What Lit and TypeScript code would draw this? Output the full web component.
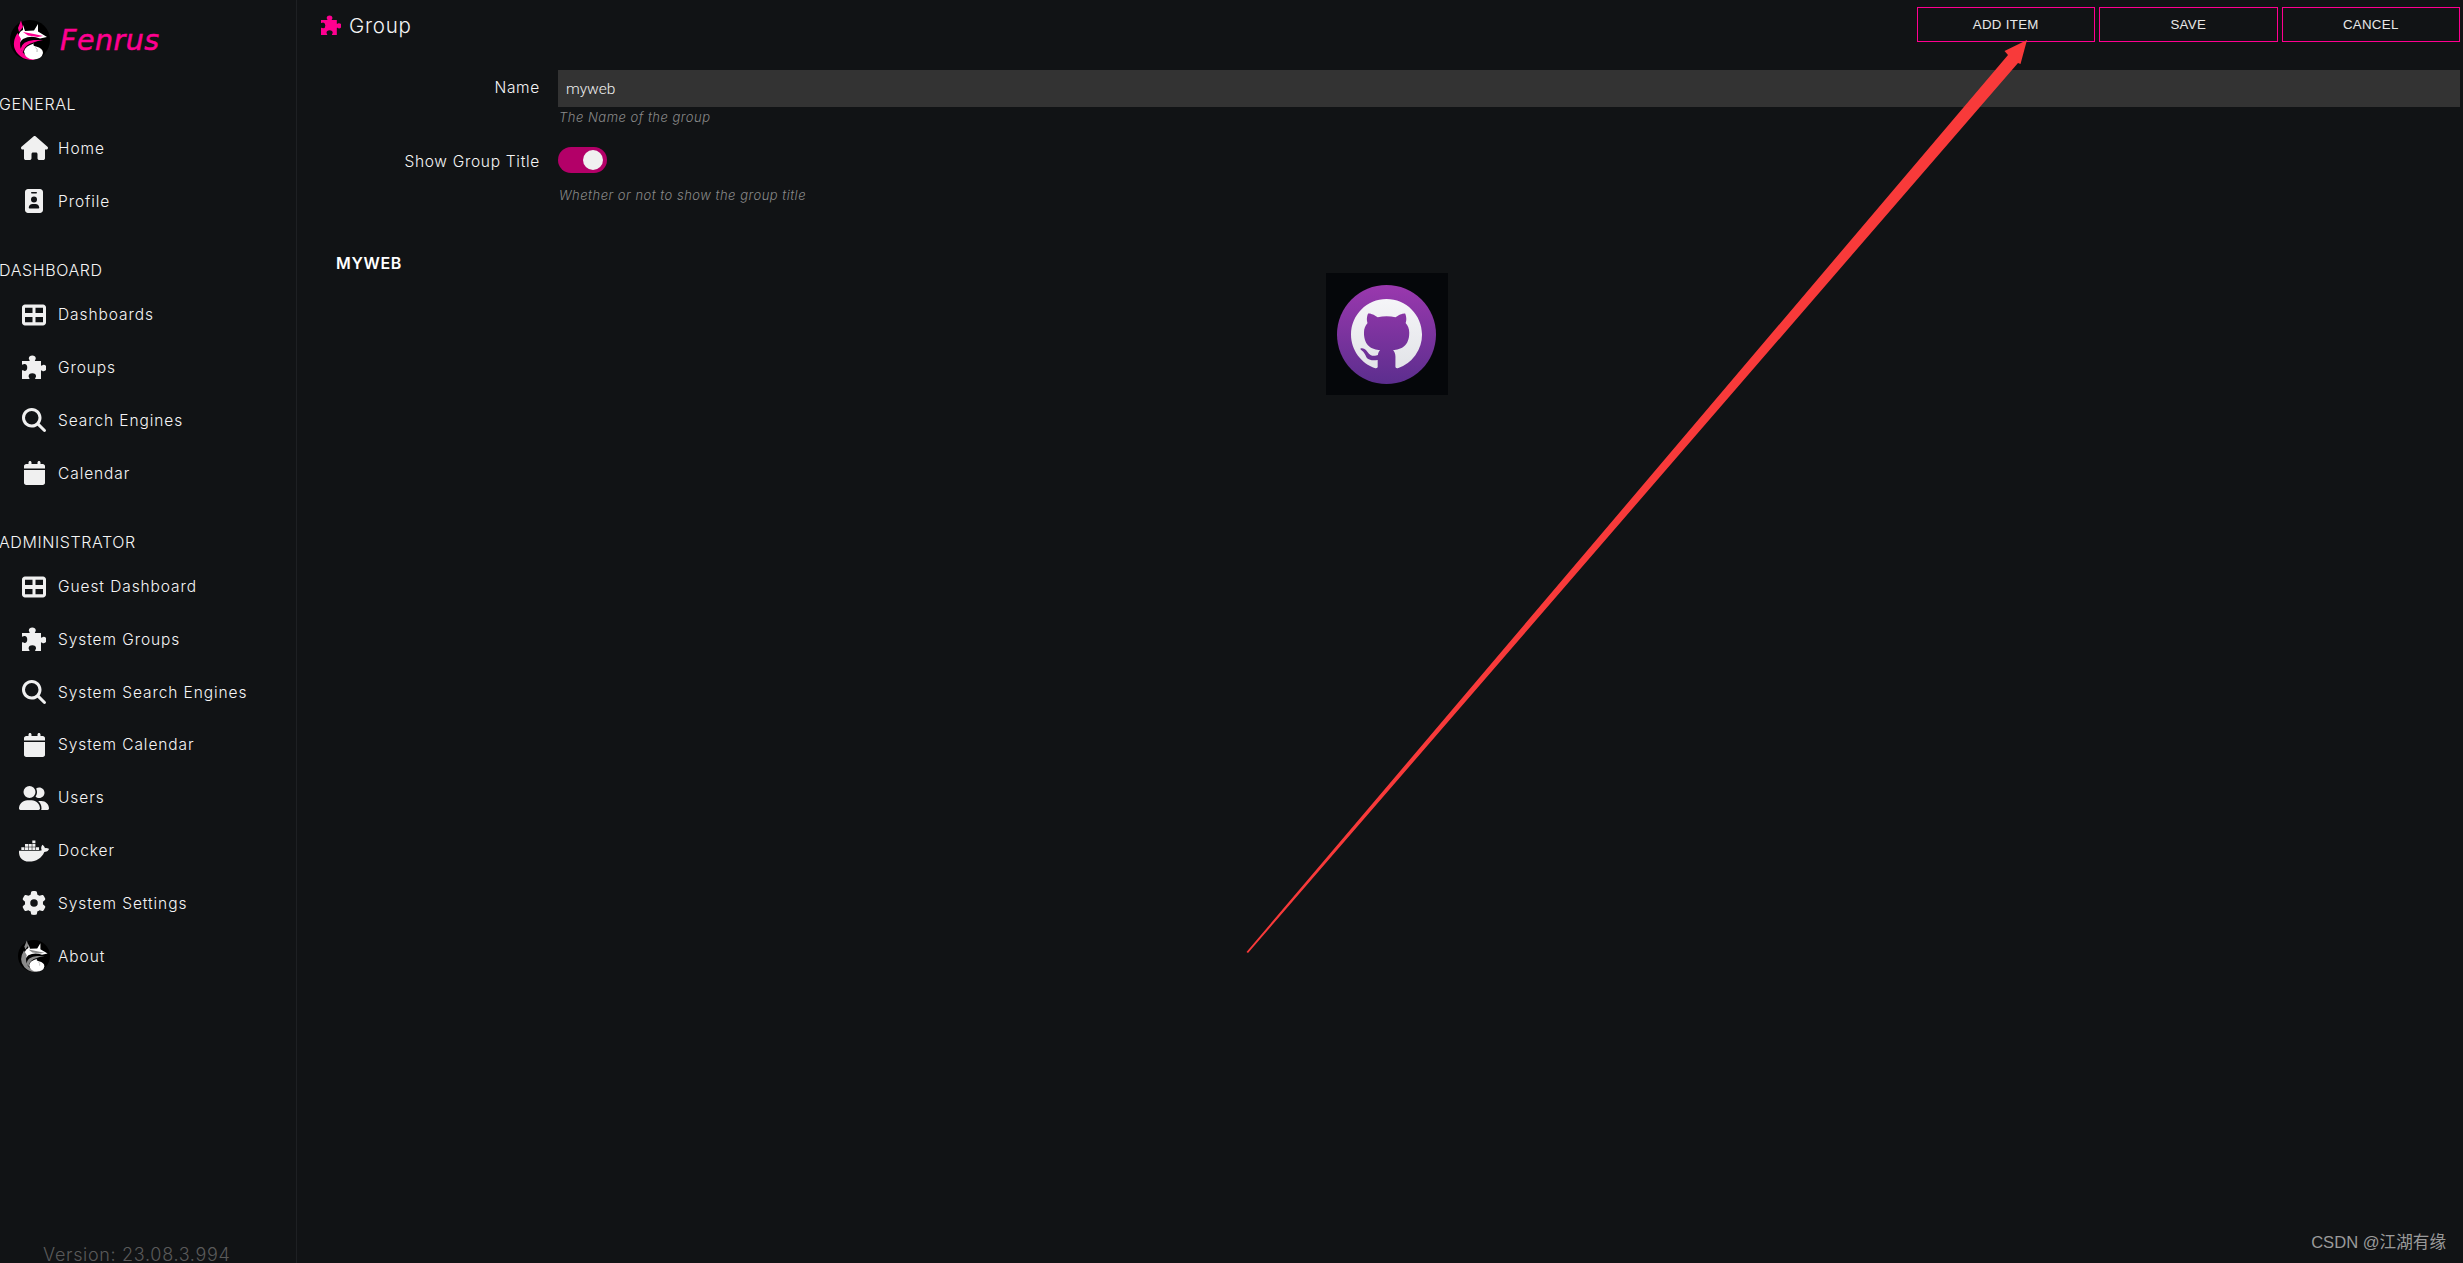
import { LitElement, html, css, svg } from 'lit';
import { customElement, property } from 'lit/decorators.js';

type Icon = { w: number; d: string };

const ICONS: Record<string, Icon> = {
  home: { w: 576, d: 'M575.8 255.5c0 18-15 32.1-32 32.1h-32l.7 160.2c0 2.7-.2 5.4-.5 8.1V472c0 22.1-17.9 40-40 40H456c-1.1 0-2.2 0-3.3-.1c-1.4 .1-2.8 .1-4.2 .1H416 392c-22.1 0-40-17.9-40-40V448 384c0-17.7-14.3-32-32-32H256c-17.7 0-32 14.3-32 32v64 24c0 22.1-17.9 40-40 40H160 128.1c-1.5 0-3-.1-4.5-.2c-1.2 .1-2.4 .2-3.6 .2H104c-22.1 0-40-17.9-40-40V360c0-.9 0-1.9 .1-2.8V287.6H32c-18 0-32-14-32-32.1c0-9 3-17 10-24L266.4 8c7-7 15-8 22-8s15 2 21 7L564.8 231.5c8 7 12 15 11 24z' },
  badge: { w: 384, d: 'M64 0C28.7 0 0 28.7 0 64V448c0 35.3 28.7 64 64 64H320c35.3 0 64-28.7 64-64V64c0-35.3-28.7-64-64-64H64zm96 320h64c44.2 0 80 35.8 80 80c0 8.8-7.2 16-16 16H96c-8.8 0-16-7.2-16-16c0-44.2 35.8-80 80-80zm-32-96a64 64 0 1 1 128 0 64 64 0 1 1 -128 0zM144 64h96c8.8 0 16 7.2 16 16s-7.2 16-16 16H144c-8.8 0-16-7.2-16-16s7.2-16 16-16z' },
  grid: { w: 512, d: 'M448 100V215H288V100H448zm0 197V412H288V297H448zM224 215H64V100H224V215zM64 297H224V412H64V297zM64 32C28.7 32 0 60.7 0 96V416c0 35.3 28.7 64 64 64H448c35.3 0 64-28.7 64-64V96c0-35.3-28.7-64-64-64H64z' },
  puzzle: { w: 512, d: 'M0 128H160C171 107 145 98 145 68A75 64 0 0 1 294 68C294 98 269 107 277 128H405V224C427 235 435 209 459 209A64 68 0 0 1 459 345C435 345 427 320 405 331V512H282C273 491 299 480 299 454A79 64 0 0 0 141 454C141 480 166 491 158 512H0V331C21 320 32 341 55 341A64 75 0 0 0 55 192C32 192 21 213 0 203Z' },
  search: { w: 512, d: 'M416 208c0 45.9-14.9 88.3-40 122.7L502.6 457.4c12.5 12.5 12.5 32.8 0 45.3s-32.8 12.5-45.3 0L330.7 376c-34.4 25.2-76.8 40-122.7 40C93.1 416 0 322.9 0 208S93.1 0 208 0S416 93.1 416 208zM208 352a144 144 0 1 0 0-288 144 144 0 1 0 0 288z' },
  calendar: { w: 448, d: 'M96 32V64H48C21.5 64 0 85.5 0 112v48H448V112c0-26.5-21.5-48-48-48H352V32c0-17.7-14.3-32-32-32s-32 14.3-32 32V64H160V32c0-17.7-14.3-32-32-32S96 14.3 96 32zM448 192H0V464c0 26.5 21.5 48 48 48H400c26.5 0 48-21.5 48-48V192z' },
  users: { w: 640, d: 'M96 128a128 128 0 1 1 256 0A128 128 0 1 1 96 128zM0 482.3C0 383.8 79.8 304 178.3 304h91.4C368.2 304 448 383.8 448 482.3c0 16.4-13.3 29.7-29.7 29.7H29.7C13.3 512 0 498.7 0 482.3zM609.3 512H471.4c5.4-9.4 8.6-20.3 8.6-32v-8c0-60.7-27.1-115.2-69.8-151.8c2.4-.1 4.7-.2 7.1-.2h61.4C567.8 320 640 392.2 640 481.3c0 17-13.8 30.7-30.7 30.7zM432 256c-31 0-59-12.6-79.3-32.9C372.4 196.5 384 163.6 384 128c0-26.8-6.6-52.1-18.3-74.3C384.3 40.1 407.2 32 432 32c61.9 0 112 50.1 112 112s-50.1 112-112 112z' },
  docker: { w: 640, d: 'M349.9 236.3h-66.1v-59.4h66.1v59.4zm0-204.3h-66.1v60.7h66.1V32zm78.2 144.8H362v59.4h66.1v-59.4zm-156.3-72.1h-66.1v60.1h66.1v-60.1zm78.1 0h-66.1v60.1h66.1v-60.1zm276.8 100c-14.4-9.7-47.6-13.2-73.1-8.4-3.3-24-16.7-44.9-41.1-63.7l-14-9.3-9.3 14c-18.4 27.8-23.4 73.6-3.7 103.8-8.7 4.7-25.8 11.1-48.4 10.7H2.4c-8.7 50.8 5.8 116.8 44 162.1 37.1 43.9 92.7 66.2 165.4 66.2 157.4 0 273.9-72.5 328.4-204.2 21.4.4 67.6.1 91.3-45.2 1.5-2.5 6.6-13.2 8.5-17.1l-13.3-8.9zm-511.1-27.9h-66v59.4h66.1v-59.4zm78.1 0h-66.1v59.4h66.1v-59.4zm78.1 0h-66.1v59.4h66.1v-59.4zm-78.1-72.1h-66.1v60.1h66.1v-60.1z' },
  cog: { w: 512, d: 'M495.9 166.6c3.2 8.7 .5 18.4-6.4 24.6l-43.3 39.4c1.1 8.3 1.7 16.8 1.7 25.4s-.6 17.1-1.7 25.4l43.3 39.4c6.9 6.2 9.6 15.9 6.4 24.6c-4.4 11.9-9.7 23.3-15.8 34.3l-4.7 8.1c-6.6 11-14 21.4-22.1 31.2c-5.9 7.2-15.7 9.6-24.5 6.8l-55.7-17.7c-13.4 10.3-28.2 18.9-44 25.4l-12.5 57.1c-2 9.1-9 16.3-18.2 17.8c-13.8 2.3-28 3.5-42.5 3.5s-28.7-1.2-42.5-3.5c-9.2-1.5-16.2-8.7-18.2-17.8l-12.5-57.1c-15.8-6.5-30.6-15.1-44-25.4L83.1 425.9c-8.8 2.8-18.6 .3-24.5-6.8c-8.1-9.8-15.5-20.2-22.1-31.2l-4.7-8.1c-6.1-11-11.4-22.4-15.8-34.3c-3.2-8.7-.5-18.4 6.4-24.6l43.3-39.4C64.6 273.1 64 264.6 64 256s.6-17.1 1.7-25.4L22.4 191.2c-6.9-6.2-9.6-15.9-6.4-24.6c4.4-11.9 9.7-23.3 15.8-34.3l4.7-8.1c6.6-11 14-21.4 22.1-31.2c5.9-7.2 15.7-9.6 24.5-6.8l55.7 17.7c13.4-10.3 28.2-18.9 44-25.4l12.5-57.1c2-9.1 9-16.3 18.2-17.8C227.3 1.2 241.5 0 256 0s28.7 1.2 42.5 3.5c9.2 1.5 16.2 8.7 18.2 17.8l12.5 57.1c15.8 6.5 30.6 15.1 44 25.4l55.7-17.7c8.8-2.8 18.6-.3 24.5 6.8c8.1 9.8 15.5 20.2 22.1 31.2l4.7 8.1c6.1 11 11.4 22.4 15.8 34.3zM256 336a80 80 0 1 0 0-160 80 80 0 1 0 0 160z' },
};

const GITHUB = 'M8 0C3.58 0 0 3.58 0 8c0 3.54 2.29 6.53 5.47 7.59.4.07.55-.17.55-.38 0-.19-.01-.82-.01-1.49-2.01.37-2.53-.49-2.69-.94-.09-.23-.48-.94-.82-1.13-.28-.15-.68-.52-.01-.53.63-.01 1.08.58 1.23.82.72 1.21 1.87.87 2.33.66.07-.52.28-.87.51-1.07-1.78-.2-3.64-.89-3.64-3.95 0-.87.31-1.59.82-2.15-.08-.2-.36-1.02.08-2.12 0 0 .67-.21 2.2.82.64-.18 1.32-.27 2-.27.68 0 1.36.09 2 .27 1.53-1.04 2.2-.82 2.2-.82.44 1.1.16 1.92.08 2.12.51.56.82 1.27.82 2.15 0 3.07-1.87 3.75-3.65 3.95.29.25.54.73.54 1.48 0 1.07-.01 1.93-.01 2.2 0 .21.15.46.55.38A8.013 8.013 0 0016 8c0-4.42-3.58-8-8-8z';

const NAV = [
  {
    title: 'General',
    items: [
      ['Home', 'home'],
      ['Profile', 'badge'],
    ],
  },
  {
    title: 'Dashboard',
    items: [
      ['Dashboards', 'grid'],
      ['Groups', 'puzzle'],
      ['Search Engines', 'search'],
      ['Calendar', 'calendar'],
    ],
  },
  {
    title: 'Administrator',
    items: [
      ['Guest Dashboard', 'grid'],
      ['System Groups', 'puzzle'],
      ['System Search Engines', 'search'],
      ['System Calendar', 'calendar'],
      ['Users', 'users'],
      ['Docker', 'docker'],
      ['System Settings', 'cog'],
      ['About', 'fox'],
    ],
  },
];

/** Fenrus fox head in a black disc; accent switches between brand pink and grey. */
@customElement('fox-logo')
export class FoxLogo extends LitElement {
  static styles = css`
    :host {
      display: block;
      width: 40px;
      height: 40px;
    }
    svg {
      display: block;
      width: 100%;
      height: 100%;
    }
  `;

  @property() accent = '#ff0090';

  render() {
    return html`<svg viewBox="0 0 40 40">
      ${svg`
        <circle cx="20" cy="20" r="20" fill="#000" />
        <path d="M13 5 L15 11 L24 10.5 L28 4 L28 11.5 L37 17 L30 18.5 Q21 15 13 19 Q9 22 8.5 27 Q7 20 8.5 15 Q10 11 13 10 Z" fill="#fff" />
        <path d="M13 12 L24 14 L33 16 L28 17 L18 15.5 Z" fill=${this.accent} />
        <path d="M11 0.5 L13 7 L9 12 L8 8 Z" fill=${this.accent} />
        <path d="M7.5 13 Q0 25 8 34 Q14 41 26 40 Q13 37 10.5 28 Q9.5 23 11 19 Z" fill=${this.accent} />
        <path d="M10.5 29 Q12 21 24 20 L33 20 Q22 22 17 25.5 Q13 29 13 33 Z" fill=${this.accent} />
        <path d="M14 31.5 Q15 26 24 23.5 Q22 25.5 26 26.5 Q33 28 33 33 Q32 39 23 39.5 Q15 39 14 31.5 Z" fill="#fff" />
        <path d="M27 32 Q28 29 25.5 27.5" fill="none" stroke="#999" stroke-width=".7" />
      `}
    </svg>`;
  }
}

@customElement('app-root')
export class AppRoot extends LitElement {
  static styles = css`
    :host {
      display: flex;
      height: 100vh;
      overflow: hidden;
      background: #111315;
      color: #f5f5f5;
      font-family: Inter, 'Noto Sans', sans-serif;
      font-weight: 300;
    }

    .sidebar {
      width: 296px;
      flex: none;
      display: flex;
      flex-direction: column;
      border-right: 1px solid #1e2023;
      overflow: hidden;
    }

    .brand {
      height: 87px;
      display: flex;
      align-items: flex-start;
      padding: 20px 0 0 10px;
      box-sizing: border-box;
      gap: 10px;
    }

    .brand-name {
      font-family: 'DejaVu Sans', sans-serif;
      font-size: 28.5px;
      font-style: italic;
      font-weight: 400;
      line-height: 42px;
      color: #ff0090;
      -webkit-text-stroke: 0.5px #ff0090;
      letter-spacing: 0.5px;
    }

    .section {
      margin-bottom: 25.7px;
    }

    .section-title {
      height: 35px;
      line-height: 35px;
      margin-left: -1px;
      font-size: 16px;
      letter-spacing: 0.6px;
      text-transform: uppercase;
      white-space: nowrap;
    }

    .item {
      height: 52.8px;
      display: flex;
      align-items: center;
      font-size: 15.5px;
      letter-spacing: 0.92px;
      white-space: nowrap;
    }

    .item-icon {
      width: 48px;
      margin-left: 10px;
      flex: none;
      display: flex;
      justify-content: center;
      align-items: center;
    }

    .icon {
      height: 24px;
      display: block;
      fill: #f0f0f0;
    }

    .about-logo {
      width: 32px;
      height: 32px;
    }

    .version {
      margin-top: auto;
      margin-bottom: -3px;
      padding-left: 43px;
      height: 22px;
      line-height: 22px;
      font-size: 18px;
      letter-spacing: 0.68px;
      color: #5a5a5a;
      white-space: nowrap;
    }

    .main {
      flex: 1;
      min-width: 0;
      display: flex;
      flex-direction: column;
    }

    .topbar {
      height: 49px;
      padding: 7px 3px 0 24px;
      box-sizing: border-box;
      display: flex;
      align-items: flex-start;
    }

    .title {
      display: flex;
      align-items: center;
      gap: 8px;
      height: 36px;
      font-size: 20.5px;
      letter-spacing: 0.75px;
    }

    .title .icon {
      height: 20px;
      fill: #ff0090;
    }

    .actions {
      margin-left: auto;
      display: flex;
      gap: 4px;
    }

    .btn {
      width: 178.5px;
      height: 35px;
      box-sizing: border-box;
      border: 1px solid #ff0090;
      background: transparent;
      color: #e8e8e8;
      font-family: 'Liberation Sans', Arial, sans-serif;
      font-size: 13.3px;
      letter-spacing: 0.3px;
      padding: 0;
    }

    .row {
      display: flex;
      gap: 18px;
    }

    .row + .row {
      margin-top: 22px;
    }

    .name-row {
      padding-top: 21px;
    }

    .label {
      width: 243px;
      text-align: right;
      font-size: 15.5px;
      letter-spacing: 0.7px;
      flex: none;
    }

    .label.for-input {
      line-height: 35px;
    }

    .label.for-toggle {
      line-height: 29px;
    }

    .control {
      flex: 1;
      min-width: 0;
      padding-right: 3px;
    }

    .input {
      display: block;
      width: 100%;
      height: 37px;
      box-sizing: border-box;
      background: #333;
      color: #f0f0f0;
      border: 0;
      padding: 0 8px;
      font-family: Roboto, sans-serif;
      font-size: 15.5px;
      font-weight: 300;
      outline: none;
    }

    .hint {
      margin-top: 2px;
      padding-left: 1px;
      font-size: 13px;
      line-height: 16px;
      font-style: italic;
      letter-spacing: 0.5px;
      color: #8a8a8a;
    }

    .toggle {
      width: 49px;
      height: 26px;
      border-radius: 13px;
      background: #b30068;
      position: relative;
    }

    .toggle::after {
      content: '';
      position: absolute;
      top: 3px;
      right: 4px;
      width: 20px;
      height: 20px;
      border-radius: 50%;
      background: #f0f0f0;
    }

    .toggle-hint {
      margin-top: 14px;
    }

    .group {
      margin: 50px 26px 0 39px;
    }

    .group-title {
      font-size: 16px;
      line-height: 20px;
      font-weight: 600;
      letter-spacing: 0.65px;
      text-transform: uppercase;
      color: #fff;
      height: 20px;
    }

    .tiles {
      display: flex;
      justify-content: center;
    }

    .tile {
      width: 122px;
      height: 122px;
      background: #05070a;
      display: flex;
      align-items: center;
      justify-content: center;
    }

    .overlay {
      position: absolute;
      inset: 0;
      width: 100%;
      height: 100%;
      pointer-events: none;
    }

    .watermark {
      position: absolute;
      right: 17px;
      bottom: 10px;
      font-family: 'Liberation Sans', 'Noto Sans CJK SC', sans-serif;
      font-weight: 400;
      font-size: 16.6px;
      line-height: 20px;
      color: #9a9a9a;
    }
  `;

  private icon(name: string) {
    const ic = ICONS[name];
    return html`<svg class="icon" viewBox="0 0 ${ic.w} 512" style="width:${(ic.w / 512) * 24}px">
      <path d=${ic.d}></path>
    </svg>`;
  }

  render() {
    return html`
      <aside class="sidebar">
        <div class="brand">
          <fox-logo></fox-logo>
          <span class="brand-name">Fenrus</span>
        </div>
        ${NAV.map(
          (s) => html`<section class="section">
            <div class="section-title">${s.title}</div>
            ${s.items.map(
              ([label, ic]) => html`<div class="item">
                <span class="item-icon">
                  ${ic === 'fox'
                    ? html`<fox-logo class="about-logo" accent="#8a8a8a"></fox-logo>`
                    : this.icon(ic)}
                </span>
                <span>${label}</span>
              </div>`
            )}
          </section>`
        )}
        <div class="version">Version: 23.08.3.994</div>
      </aside>

      <main class="main">
        <header class="topbar">
          <div class="title">
            <svg class="icon" viewBox="0 0 512 512" style="width:20px"><path d=${ICONS.puzzle.d}></path></svg>
            <span>Group</span>
          </div>
          <div class="actions">
            <button class="btn">ADD ITEM</button>
            <button class="btn">SAVE</button>
            <button class="btn">CANCEL</button>
          </div>
        </header>

        <div class="row name-row">
          <label class="label for-input">Name</label>
          <div class="control">
            <input class="input" .value=${'myweb'} />
            <div class="hint">The Name of the group</div>
          </div>
        </div>
        <div class="row">
          <label class="label for-toggle">Show Group Title</label>
          <div class="control">
            <div class="toggle"></div>
            <div class="hint toggle-hint">Whether or not to show the group title</div>
          </div>
        </div>

        <div class="group">
          <div class="group-title">myweb</div>
          <div class="tiles">
            <div class="tile">
              <svg width="99" height="99" viewBox="0 0 99 99">
                <defs>
                  <linearGradient id="gh-bg" x1="0" y1="0" x2="0" y2="1">
                    <stop offset="0" stop-color="#9a38ae"></stop>
                    <stop offset="1" stop-color="#5c2e8e"></stop>
                  </linearGradient>
                  <linearGradient id="gh-fg" x1="0" y1="0" x2="0" y2="1">
                    <stop offset="0" stop-color="#f5f5f8"></stop>
                    <stop offset="1" stop-color="#e2e4e8"></stop>
                  </linearGradient>
                </defs>
                <circle cx="49.5" cy="49.5" r="49.5" fill="url(#gh-bg)"></circle>
                <g transform="translate(14 14) scale(4.44)">
                  <path d=${GITHUB} fill="url(#gh-fg)" fill-rule="evenodd"></path>
                </g>
              </svg>
            </div>
          </div>
        </div>
      </main>

      <svg class="overlay" viewBox="0 0 2463 1263">
        <polygon
          points="2027,40 2004.5,51 2008,55 1246.5,952 1248,953 2018,63 2020.5,64"
          fill="#f83a3a"
        ></polygon>
      </svg>
      <div class="watermark">CSDN @江湖有缘</div>
    `;
  }
}
